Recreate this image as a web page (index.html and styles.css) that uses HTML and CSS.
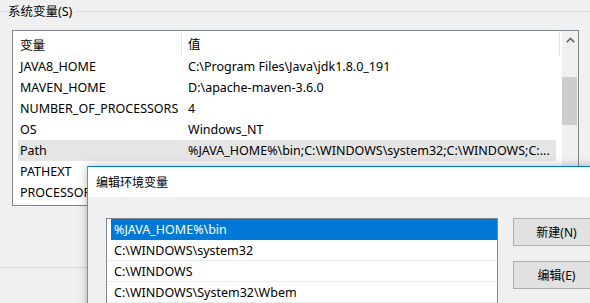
FILE: index.html
```html
<!DOCTYPE html>
<html lang="zh-CN">
<head>
<meta charset="utf-8">
<title>系统变量</title>
<link rel="stylesheet" href="styles.css">
</head>
<body>
<div class="screen">
  <section class="group">
    <div class="group-head"><span class="group-title">系统变量(S)</span></div>
    <div class="listview">
      <div class="lv-main">
        <div class="lv-header">
          <div class="hcol hcol1">变量</div>
          <div class="hcol hcol2">值</div>
        </div>
        <div class="lv-row"><span class="c1">JAVA8_HOME</span><span class="c2">C:\Program Files\Java\jdk1.8.0_191</span></div>
        <div class="lv-row"><span class="c1">MAVEN_HOME</span><span class="c2">D:\apache-maven-3.6.0</span></div>
        <div class="lv-row"><span class="c1">NUMBER_OF_PROCESSORS</span><span class="c2">4</span></div>
        <div class="lv-row"><span class="c1">OS</span><span class="c2">Windows_NT</span></div>
        <div class="lv-row is-selected"><span class="c1">Path</span><span class="c2">%JAVA_HOME%\bin;C:\WINDOWS\system32;C:\WINDOWS;C:...</span></div>
        <div class="lv-row"><span class="c1">PATHEXT</span><span class="c2">.COM;.EXE;.BAT;.CMD;.VBS;.VBE;.JS;.JSE;.WSF;.WSH;.MSC</span></div>
        <div class="lv-row"><span class="c1">PROCESSOR_ARCHITECTURE</span><span class="c2">AMD64</span></div>
      </div>
      <div class="vscroll">
        <div class="sb-arrow">
          <svg width="9" height="6" viewBox="0 0 9 6"><path d="M0.8 5.2 L4.5 1.5 L8.2 5.2" fill="none" stroke="#606060" stroke-width="1.6"/></svg>
        </div>
        <div class="sb-track"><div class="sb-thumb"></div></div>
      </div>
    </div>
  </section>

  <div class="dialog">
    <div class="dlg-title">编辑环境变量</div>
    <div class="dlg-body">
      <div class="path-list">
        <div class="path-item is-active">%JAVA_HOME%\bin</div>
        <div class="path-item">C:\WINDOWS\system32</div>
        <div class="path-item">C:\WINDOWS</div>
        <div class="path-item">C:\WINDOWS\System32\Wbem</div>
      </div>
      <div class="dlg-buttons">
        <button class="btn">新建(N)</button>
        <button class="btn">编辑(E)</button>
      </div>
    </div>
  </div>
</div>
</body>
</html>
```

FILE: styles.css
```css
* { box-sizing: border-box; }
html, body {
  margin: 0;
  padding: 0;
  width: 590px;
  height: 303px;
  overflow: hidden;
  background: #f0f0f0;
}
body {
  font-family: "Noto Sans", "Noto Sans CJK SC", sans-serif;
  font-size: 12.5px;
  color: #000;
}
.screen {
  position: relative;
  width: 590px;
  height: 303px;
  overflow: hidden;
}
.group {
  padding-bottom: 61px;
  border-bottom: 1px solid #d9d9d9;
}
.group-head {
  height: 23px;
  display: flex;
  align-items: center;
}
.group-head::before {
  content: "";
  width: 7px;
  height: 1px;
  background: #dcdcdc;
}
.group-head::after {
  content: "";
  flex: 1;
  height: 1px;
  background: #dcdcdc;
}
.group-title {
  padding: 0 4px 0 1px;
  line-height: 16px;
}
.listview {
  margin: 7px 0 0 12px;
  width: 567px;
  height: 176px;
  border: 1px solid #828790;
  background: #fff;
  display: flex;
  overflow: hidden;
}
.lv-main {
  width: 548px;
  flex: none;
  overflow: hidden;
}
.lv-header {
  height: 25px;
  display: flex;
  align-items: stretch;
  border-right: 1px solid #e5e5e5;
  margin-right: 1px;
  width: 547px;
}
.hcol {
  display: flex;
  align-items: center;
}
.hcol1 {
  width: 169px;
  padding-left: 7px;
  border-right: 1px solid #e5e5e5;
  margin: 1px 0 0;
}
.hcol2 {
  padding-left: 6px;
}
.lv-row {
  height: 21px;
  display: flex;
  align-items: center;
  margin-left: 5px;
  width: 538px;
  white-space: nowrap;
}
.lv-row.is-selected {
  background: #e5e5e5;
}
.c1 {
  width: 170px;
  flex: none;
  padding-left: 2px;
  overflow: hidden;
}
.c2 {
  flex: 1;
  overflow: hidden;
}
.vscroll {
  width: 17px;
  margin-left: 1px;
  background: #f0f0f0;
  display: flex;
  flex-direction: column;
}
.sb-arrow {
  height: 17px;
  display: flex;
  align-items: center;
  justify-content: center;
}
.sb-track {
  flex: 1;
  padding-top: 29px;
}
.sb-thumb {
  width: 15px;
  height: 48px;
  background: #cdcdcd;
}

.dialog {
  position: absolute;
  left: 87px;
  top: 166px;
  width: 540px;
  height: 200px;
  background: #f0f0f0;
  border: 1px solid #6b8fb5;
  border-top-color: #0078d7;
  box-shadow: 0 0 9px rgba(0, 0, 0, 0.28);
}
.dlg-title {
  height: 30px;
  background: #fff;
  padding-left: 8px;
  display: flex;
  align-items: center;
  font-size: 12px;
}
.dlg-body {
  display: flex;
  align-items: flex-start;
  padding: 21px 0 0 18px;
  gap: 15px;
}
.path-list {
  width: 392px;
  height: 120px;
  border: 1px solid #828790;
  background: #fff;
  flex: none;
}
.path-item {
  height: 21px;
  margin-left: 1px;
  padding-left: 6px;
  display: flex;
  align-items: center;
  border-bottom: 1px solid #ebebeb;
  white-space: nowrap;
}
.path-item.is-active {
  margin-left: 4px;
  padding-left: 3px;
  background: #0078d7;
  color: #fff;
  border-bottom-color: #0078d7;
}
.dlg-buttons {
  display: flex;
  flex-direction: column;
  gap: 15px;
  flex: none;
}
.btn {
  width: 87px;
  height: 28px;
  background: #e1e1e1;
  border: 1px solid #adadad;
  font-family: "Noto Sans", "Noto Sans CJK SC", sans-serif;
  font-size: 12px;
  color: #000;
  padding: 0;
  margin: 0;
}
```
